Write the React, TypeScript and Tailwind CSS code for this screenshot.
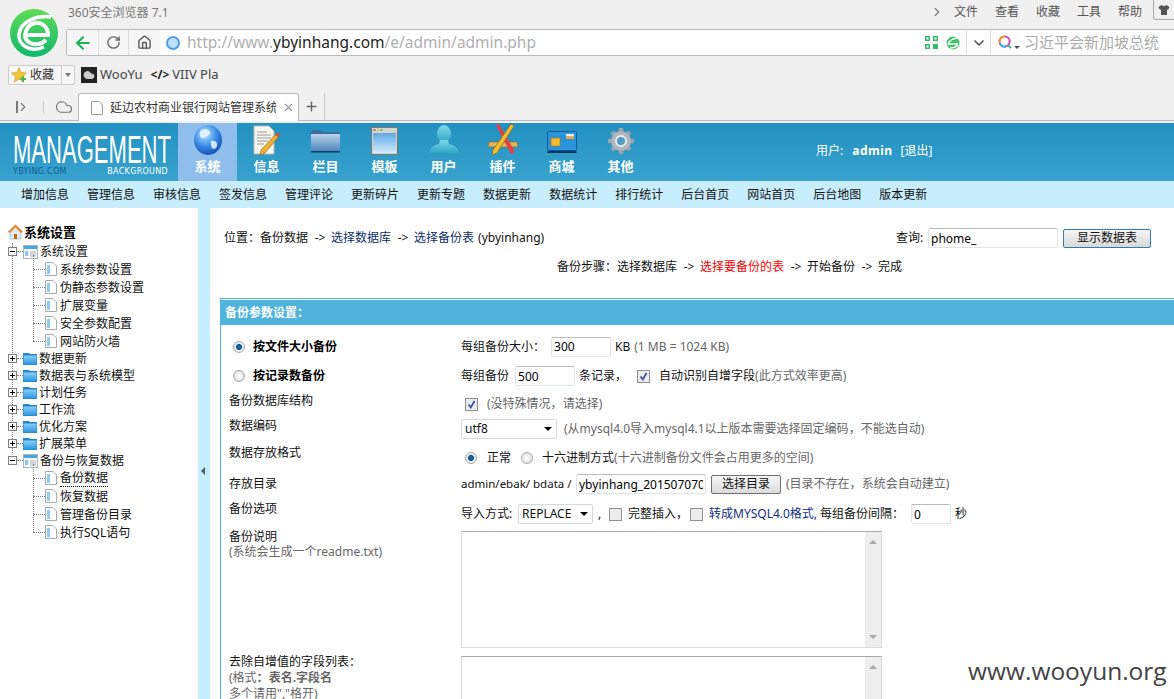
import type { ReactNode } from "react";
import { ArrowLeft, ChevronDown, ChevronRight, House, RotateCw, Plus, X, Cloud } from "lucide-react";

const menuItems = ["增加信息", "管理信息", "审核信息", "签发信息", "管理评论", "更新碎片", "更新专题", "数据更新", "数据统计", "排行统计", "后台首页", "网站首页", "后台地图", "版本更新"];

// full width punctuation, the page was made with a CJK system font
const FC = "\uFF1A";
const FM = "\uFF0C";

function BrowserLogo() {
  return (
    <svg viewBox="0 0 48 48" className="w-12 h-12 shrink-0">
      <defs>
        <linearGradient id="lg" x1="0" y1="0" x2="0" y2="1">
          <stop offset="0" stopColor="#5fdc55" />
          <stop offset="1" stopColor="#10b86e" />
        </linearGradient>
      </defs>
      <circle cx="24" cy="24" r="24" fill="url(#lg)" />
      <path d="M41 8 C27 6 11 12 9 25 C8 36 20 44 34 38" fill="none" stroke="#fff" strokeWidth="3.5" />
      <path d="M15 26 H38 C38 17 31 13 25 14 C20 15 16 19 15 26 C15 32 21 36 27 35 C31 35 34 33 36 31" fill="none" stroke="#fff" strokeWidth="4" />
    </svg>
  );
}

function Globe() {
  return (
    <svg viewBox="0 0 28 30" className="w-[28px] h-[30px]">
      <defs>
        <radialGradient id="gl" cx="0.4" cy="0.3" r="0.8">
          <stop offset="0" stopColor="#bfe6ff" />
          <stop offset="0.5" stopColor="#3a8fe8" />
          <stop offset="1" stopColor="#0c3fa8" />
        </radialGradient>
      </defs>
      <ellipse cx="14" cy="15" rx="14" ry="15" fill="url(#gl)" />
      <path d="M7 5 C12 3 17 5 16 9 C13 11 11 14 7 13 C5 11 5 7 7 5 Z M17 16 C22 15 25 18 22 23 C19 26 16 22 17 16 Z" fill="#e9f6ff" opacity="0.85" />
    </svg>
  );
}

function DocPencil() {
  return (
    <svg viewBox="0 0 27 30" className="w-[27px] h-[30px]">
      <path d="M1 1 H16 L21 6 V29 H1 Z" fill="#f6f6f2" stroke="#b9b9b0" />
      <path d="M4 7 H14 M4 10 H18 M4 13 H18 M4 16 H15 M4 19 H11" stroke="#9a9a95" />
      <path d="M24 8 L27 10 L12 28 L7 30 L8 25 Z" fill="#f2b233" stroke="#8a5a10" strokeWidth="0.6" />
      <path d="M22 10 L25 12 L27 10 L24 8 Z" fill="#d2503c" />
    </svg>
  );
}

function BigFolder() {
  return (
    <svg viewBox="0 0 31 24" className="w-[31px] h-[24px] mb-[2px]">
      <defs>
        <linearGradient id="bf" x1="0" y1="0" x2="0" y2="1">
          <stop offset="0" stopColor="#b9d3ea" />
          <stop offset="1" stopColor="#4f87bd" />
        </linearGradient>
      </defs>
      <path d="M1 3 Q1 1 3 1 H11 L13 3 H29 Q30 3 30 5 V22 H1 Z" fill="#3e6d9b" />
      <rect x="1" y="5" width="29" height="17" fill="url(#bf)" />
      <rect x="1" y="22" width="29" height="1.5" fill="#0e3b63" />
    </svg>
  );
}

function WindowIcon() {
  return (
    <svg viewBox="0 0 27 28" className="w-[27px] h-[28px]">
      <defs>
        <linearGradient id="wn" x1="0" y1="0" x2="0" y2="1">
          <stop offset="0" stopColor="#5fa9e6" />
          <stop offset="1" stopColor="#d3ebfb" />
        </linearGradient>
      </defs>
      <rect x="0.5" y="0.5" width="26" height="27" fill="#d4d4cc" stroke="#777" />
      <circle cx="3.5" cy="3" r="1.1" fill="#e0483c" />
      <circle cx="7" cy="3" r="1.1" fill="#e8c23c" />
      <circle cx="10.5" cy="3" r="1.1" fill="#54b84c" />
      <rect x="2" y="6" width="23" height="20" fill="url(#wn)" />
    </svg>
  );
}

function UserIcon() {
  return (
    <svg viewBox="0 0 30 29" className="w-[30px] h-[29px] mb-[1px]">
      <defs>
        <linearGradient id="us" x1="0" y1="0" x2="0" y2="1">
          <stop offset="0" stopColor="#7fd8e8" />
          <stop offset="1" stopColor="#2ba6c4" />
        </linearGradient>
      </defs>
      <ellipse cx="15" cy="9" rx="7" ry="9" fill="url(#us)" />
      <path d="M11 15 H19 L20 19 C26 20 29 23 30 28 H0 C1 23 4 20 10 19 Z" fill="url(#us)" />
    </svg>
  );
}

function ToolsIcon() {
  return (
    <svg viewBox="0 0 32 31" className="w-[32px] h-[31px]">
      <path d="M2 18 L30 18 L31 23 L1 23 Z" fill="#e0b45c" stroke="#8a6418" strokeWidth="0.6" />
      <path d="M9 1 L12 0 L28 28 L24 30 Z" fill="#e8403c" />
      <path d="M24 0 L27 2 L10 29 L5 31 L6 26 Z" fill="#f4bd2d" stroke="#8a5a10" strokeWidth="0.6" />
    </svg>
  );
}

function CardIcon() {
  return (
    <svg viewBox="0 0 30 22" className="w-[30px] h-[22px] mb-[2px]">
      <rect x="0.5" y="0.5" width="29" height="19" rx="1" fill="#2a93dc" stroke="#0d5a9c" />
      <rect x="4" y="7" width="9" height="8" fill="#f1b92e" stroke="#a8760e" strokeWidth="0.6" />
      <rect x="19" y="3" width="8" height="2.5" fill="#f4f4f4" />
      <rect x="19" y="5.5" width="8" height="2.5" fill="#f1a52e" />
      <rect x="0.5" y="20" width="29" height="2" fill="#08365f" />
    </svg>
  );
}

function GearIcon() {
  return (
    <svg viewBox="0 0 28 28" className="w-[28px] h-[28px]">
      <g stroke="#9aa3a9" strokeWidth="4.5">
        <path d="M14 1 V27 M1 14 H27 M5 5 L23 23 M23 5 L5 23" />
      </g>
      <circle cx="14" cy="14" r="10" fill="#b0b8bd" />
      <circle cx="14" cy="14" r="5" fill="#4d9cc6" stroke="#e8ecee" strokeWidth="2" />
    </svg>
  );
}

function NavItem({ label, icon, active }: { label: string; icon: ReactNode; active?: boolean }) {
  return (
    <div className={`w-[59px] h-[58px] flex flex-col items-center ${active ? "bg-[#8fbeec]" : ""}`}>
      <div className="h-[31px] mt-[1px] flex items-end justify-center">{icon}</div>
      <div className="mt-[3px] text-[13px] leading-[16px] font-bold text-white">{label}</div>
    </div>
  );
}

function SmallFolder() {
  return (
    <svg viewBox="0 0 14 13" className="w-[14px] h-[13px] shrink-0">
      <defs>
        <linearGradient id="sf" x1="0" y1="0" x2="0" y2="1">
          <stop offset="0" stopColor="#8ad0f8" />
          <stop offset="1" stopColor="#2a94e2" />
        </linearGradient>
      </defs>
      <path d="M0 1 H6 L7 2 H14 V13 H0 Z" fill="#1f86d0" />
      <rect x="0.5" y="3.5" width="13" height="9" fill="url(#sf)" />
    </svg>
  );
}

function OpenFolder() {
  return (
    <svg viewBox="0 0 15 14" className="w-[15px] h-[14px] shrink-0">
      <rect x="0.5" y="0.5" width="14" height="13" fill="#f4f8fb" stroke="#a9b4bc" />
      <rect x="1" y="1" width="13" height="3" fill="#45a7ea" />
      <rect x="2" y="6" width="3" height="5" fill="#8cc4ea" />
      <path d="M7 7 H13 M7 9 H13 M7 11 H13" stroke="#a9b4bc" />
    </svg>
  );
}

function Leaf() {
  return (
    <svg viewBox="0 0 12 14" className="w-[12px] h-[14px] shrink-0">
      <path d="M0.5 0.5 H8 L11.5 4 V13.5 H0.5 Z" fill="#fff" stroke="#a9a9a9" />
      <rect x="2" y="3" width="3" height="9" fill="#8fcdf0" />
    </svg>
  );
}

function Expander({ open }: { open?: boolean }) {
  return (
    <span className="relative z-10 w-[9px] h-[9px] shrink-0 border border-[#7f7f7f] bg-white flex items-center justify-center">
      <span className="w-[5px] h-px bg-black" />
      {!open && <span className="absolute w-px h-[5px] bg-black" />}
    </span>
  );
}

function TreeGroup({ label, open }: { label: string; open?: boolean }) {
  return (
    <div className="h-[17px] flex items-center pl-[8px]">
      <Expander open={open} />
      <span className="w-[6px] border-t border-dotted border-[#808080]" />
      {open ? <OpenFolder /> : <SmallFolder />}
      <span className="ml-[2px]">{label}</span>
    </div>
  );
}

function TreeLeaves({ items, current }: { items: string[]; current?: string }) {
  return (
    <div className="relative">
      <span className="absolute left-[33px] -top-[5px] bottom-[9px] border-l border-dotted border-[#808080]" />
      {items.map((item) => (
        <div key={item} className="h-[18px] flex items-center pl-[33px]">
          <span className="w-[12px] border-t border-dotted border-[#808080]" />
          <Leaf />
          <span className={`ml-[3px] ${item === current ? "border-b border-dotted border-black" : ""}`}>{item}</span>
        </div>
      ))}
    </div>
  );
}

function Sidebar() {
  return (
    <aside className="w-[198px] shrink-0 pt-[15px] text-[12px] leading-[17px] text-[#111]">
      <div className="h-[18px] flex items-center pl-[8px] text-[13px] font-bold text-black">
        <svg viewBox="0 0 15 16" className="w-[15px] h-[16px] mr-[1px]">
          <path d="M7.5 1 L15 8 L13 8 V15 H2 V8 H0 Z" fill="#dfe9f2" stroke="#8ea6bd" strokeWidth="0.6" />
          <path d="M7.5 0.5 L15 8 L12.5 8.5 L7.5 3.5 L2.5 8.5 L0 8 Z" fill="#ef8a2c" />
          <rect x="6" y="10" width="3" height="5" fill="#c76a1a" />
        </svg>
        系统设置
      </div>
      <div className="relative mt-[2px]">
        <span className="absolute left-[12px] top-0 h-[210px] border-l border-dotted border-[#808080]" />
        <TreeGroup label="系统设置" open />
        <TreeLeaves items={["系统参数设置", "伪静态参数设置", "扩展变量", "安全参数配置", "网站防火墙"]} />
        <TreeGroup label="数据更新" />
        <TreeGroup label="数据表与系统模型" />
        <TreeGroup label="计划任务" />
        <TreeGroup label="工作流" />
        <TreeGroup label="优化方案" />
        <TreeGroup label="扩展菜单" />
        <TreeGroup label="备份与恢复数据" open />
        <TreeLeaves items={["备份数据", "恢复数据", "管理备份目录", "执行SQL语句"]} current="备份数据" />
      </div>
    </aside>
  );
}

function Radio({ on }: { on?: boolean }) {
  return (
    <span className={`block w-[12px] h-[12px] rounded-full shrink-0 border border-[#a8a8a8] ${on ? "bg-[radial-gradient(circle,#1a7cc0_0%,#0b4f86_38%,#e4e4e4_45%,#ffffff_100%)]" : "bg-[radial-gradient(circle,#ffffff_0%,#d8d8d8_100%)]"}`} />
  );
}

function Check({ on }: { on?: boolean }) {
  return (
    <span className="w-[13px] h-[13px] shrink-0 border border-[#8e8f8f] bg-[#ececec] flex items-center justify-center">
      {on && (
        <svg viewBox="0 0 11 11" className="w-[11px] h-[11px]">
          <path d="M2.5 5.5 L4.8 8.5 L8.5 2" fill="none" stroke="#3a55a8" strokeWidth="1.8" />
        </svg>
      )}
    </span>
  );
}

function TextBox({ value, width }: { value: string; width: string }) {
  return (
    <input
      readOnly
      value={value}
      className={`${width} h-[20px] block shrink-0 px-[2px] border border-[#dfe3ea] border-t-[#bcbcbc] bg-white text-[12px] text-black outline-none rounded-[2px]`}
    />
  );
}

function SelectBox({ value, width }: { value: string; width: string }) {
  return (
    <div className={`${width} h-[20px] shrink-0 pl-[3px] pr-[4px] border border-[#d5d9df] rounded-[2px] flex items-center justify-between`}>
      <span>{value}</span>
      <span className="w-0 h-0 border-x-[4px] border-x-transparent border-t-[4px] border-t-black" />
    </div>
  );
}

function TextArea({ height }: { height: string }) {
  return (
    <div className={`w-[421px] ${height} border border-[#dcdcdc] border-t-[#a8a8a8] flex justify-end`}>
      <div className="w-[16px] h-full bg-[#eeeeee] flex flex-col items-center justify-between py-[8px]">
        <span className="w-0 h-0 border-x-[4px] border-x-transparent border-b-[4px] border-b-[#aaa]" />
        <span className="w-0 h-0 border-x-[4px] border-x-transparent border-t-[4px] border-t-[#aaa]" />
      </div>
    </div>
  );
}

function Row({ label, labelClass, valueClass, height, children }: { label: ReactNode; labelClass: string; valueClass: string; height: string; children: ReactNode }) {
  return (
    <div className={`grid grid-cols-[240px_1fr] ${height}`}>
      <div className={`pl-[8px] ${labelClass}`}>{label}</div>
      <div className={`flex items-center self-start whitespace-nowrap ${valueClass}`}>{children}</div>
    </div>
  );
}

function Arrow() {
  return <span className="inline-block w-[12px] ml-[6px] mr-[5px] text-center">-&gt;</span>;
}

const hint = "text-[#666]";

function BackupForm() {
  return (
    <div className="mt-[22px] ml-[10px] border-l border-t border-[#4fb3dd] text-[12px] leading-[18px] text-[#111]">
      <div className="h-[25px] mt-px bg-[#4fb3dd] pl-[4px] flex items-center font-bold text-white">备份参数设置{FC}</div>
      <div className="pt-[7px]">
        <div className="grid grid-cols-[240px_1fr] h-[29px]">
          <div className="pl-[12px] flex items-center font-bold text-black"><Radio on /><span className="ml-[8px]">按文件大小备份</span></div>
          <div className="flex items-center whitespace-nowrap">
            <span>每组备份大小{FC}</span>
            <span className="ml-[6px]"><TextBox value="300" width="w-[60px]" /></span>
            <span className="ml-[4px]">KB</span>
            <span className={`ml-[4px] ${hint}`}>(1 MB = 1024 KB)</span>
          </div>
        </div>
        <div className="grid grid-cols-[240px_1fr] h-[30px]">
          <div className="pl-[12px] flex items-center font-bold text-black"><Radio /><span className="ml-[8px]">按记录数备份</span></div>
          <div className="flex items-center whitespace-nowrap">
            <span>每组备份</span>
            <span className="ml-[6px]"><TextBox value="500" width="w-[60px]" /></span>
            <span className="ml-[4px]">条记录{FM}</span>
            <span className="ml-[10px]"><Check on /></span>
            <span className="ml-[9px]">自动识别自增字段</span>
            <span className={hint}>(此方式效率更高)</span>
          </div>
        </div>
        <Row height="h-[24px]" label="备份数据库结构" labelClass="pt-px" valueClass="pt-[4px]">
          <span className="ml-[4px]"><Check on /></span>
          <span className={`ml-[9px] ${hint}`}>(没特殊情况{FM}请选择)</span>
        </Row>
        <Row height="h-[27px]" label="数据编码" labelClass="pt-[2px]" valueClass="pt-[4px]">
          <SelectBox value="utf8" width="w-[96px]" />
          <span className={`ml-[7px] ${hint}`}>(从mysql4.0导入mysql4.1以上版本需要选择固定编码{FM}不能选自动)</span>
        </Row>
        <Row height="h-[31px]" label="数据存放格式" labelClass="pt-[2px]" valueClass="pt-[7px]">
          <span className="ml-[4px]"><Radio on /></span>
          <span className="ml-[10px]">正常</span>
          <span className="ml-[10px]"><Radio /></span>
          <span className="ml-[9px]">十六进制方式</span>
          <span className={hint}>(十六进制备份文件会占用更多的空间)</span>
        </Row>
        <Row height="h-[25px]" label="存放目录" labelClass="pt-[2px]" valueClass="pt-px">
          <span className="w-[115px] shrink-0 text-[11.5px]">admin/ebak/ bdata /</span>
          <TextBox value="ybyinhang_201507070" width="w-[130px]" />
          <span className="ml-[5px] w-[70px] h-[19px] shrink-0 border border-[#707070] rounded-[2px] bg-[linear-gradient(#f6f6f6,#dcdcdc)] flex items-center justify-center">选择目录</span>
          <span className={`ml-[5px] ${hint}`}>(目录不存在{FM}系统会自动建立)</span>
        </Row>
        <Row height="h-[29px]" label="备份选项" labelClass="pt-[2px]" valueClass="pt-[6px]">
          <span className="w-[57px] shrink-0">导入方式:</span>
          <SelectBox value="REPLACE" width="w-[75px]" />
          <span className="ml-[5px] w-[11px] shrink-0">,</span>
          <Check />
          <span className="ml-[6px] w-[62px] shrink-0">完整插入{FM}</span>
          <Check />
          <span className="ml-[6px] w-[105px] shrink-0 text-[#0b2d8a]">转成MYSQL4.0格式,</span>
          <span className="ml-[6px] w-[91px] shrink-0">每组备份间隔{FC}</span>
          <TextBox value="0" width="w-[40px]" />
          <span className="ml-[4px]">秒</span>
        </Row>
        <Row height="h-[125px]" label={<>备份说明<br /><span className={hint}>(系统会生成一个readme.txt)</span></>} labelClass="leading-[15px] pt-[2px]" valueClass="pt-[4px]">
          <TextArea height="h-[117px]" />
        </Row>
        <Row height="h-[60px]" label={<>去除自增值的字段列表{FC}<br /><span className={hint}>(格式<b>{FC}表名.字段名</b><br />多个请用","格开)</span></>} labelClass="leading-[16px] pt-[2px]" valueClass="pt-[4px]">
          <TextArea height="h-[117px]" />
        </Row>
      </div>
    </div>
  );
}

export default function App() {
  return (
    <div className="relative w-[1174px] h-[699px] overflow-hidden bg-white font-['Noto_Sans','Noto_Sans_CJK_SC',sans-serif]">
      {/* browser chrome */}
      <div className="h-[123px] bg-[#f0f0f0] text-[12px] text-[#444]">
        <div className="h-[64px] flex items-start">
          <div className="ml-[10px] mt-[9px]"><BrowserLogo /></div>
          <div className="flex-1 min-w-0 ml-[8px]">
            <div className="h-[29px] flex items-start">
              <span className="ml-[2px] mt-[4px] text-[#777]">360安全浏览器 7.1</span>
              <div className="ml-auto mt-[3px] flex items-center text-[#555]">
                <ChevronRight size={14} className="mr-[10px] text-[#777]" />
                <span className="mr-[17px]">文件</span>
                <span className="mr-[17px]">查看</span>
                <span className="mr-[17px]">收藏</span>
                <span className="mr-[17px]">工具</span>
                <span className="mr-[11px]">帮助</span>
              </div>
              <div className="w-[21px] h-[20px] border-l border-b border-[#aaa] rounded-bl-[3px] flex items-center justify-center">
                <svg viewBox="0 0 12 12" className="w-[12px] h-[12px]"><path d="M3.5 1 L0.5 3 L2 6 L3 5.5 V11 H9 V5.5 L10 6 L11.5 3 L8.5 1 Q6 3 3.5 1 Z" fill="#555" /></svg>
              </div>
            </div>
            <div className="h-[27px] bg-white border border-r-0 border-[#bbb] rounded-l-[3px] flex items-center">
              <div className="w-[32px] h-full border-r border-[#ddd] bg-[#f6f6f6] flex items-center justify-center"><ArrowLeft size={20} strokeWidth={2.5} className="text-[#1db455]" /></div>
              <div className="w-[30px] h-full border-r border-[#ddd] bg-[#f6f6f6] flex items-center justify-center"><RotateCw size={15} strokeWidth={2.2} className="text-[#666]" /></div>
              <div className="w-[31px] h-full bg-[#f6f6f6] flex items-center justify-center"><House size={15} strokeWidth={2.2} className="text-[#555]" /></div>
              <svg viewBox="0 0 16 16" className="w-[16px] h-[16px] ml-[5px] shrink-0">
                <circle cx="8" cy="8" r="6" fill="#bfe0fa" stroke="#4a9fe6" strokeWidth="2" />
              </svg>
              <span className="ml-[6px] text-[15.5px] text-[#b0b0b0] whitespace-nowrap">http://www.<span className="text-[#222]">ybyinhang.com</span>/e/admin/admin.php</span>
              <div className="ml-auto flex items-center h-full">
                <svg viewBox="0 0 13 13" className="w-[13px] h-[13px]">
                  <path d="M0 0 H5 V5 H0 Z M8 0 H13 V5 H8 Z M0 8 H5 V13 H0 Z M8 8 H13 V13 H8 Z" fill="#2fbf6c" />
                  <path d="M1.5 1.5 H3.5 V3.5 H1.5 Z M9.5 1.5 H11.5 V3.5 H9.5 Z M1.5 9.5 H3.5 V11.5 H1.5 Z" fill="#fff" />
                </svg>
                <svg viewBox="0 0 14 14" className="w-[14px] h-[14px] ml-[8px]">
                  <circle cx="7" cy="7" r="6.5" fill="#3bc46b" />
                  <path d="M2 9 C3 4 8 2 13 2 M2 8 H12 M4 12 C7 12 10 11 12 9" stroke="#fff" strokeWidth="1.4" fill="none" />
                </svg>
                <div className="ml-[6px] w-[25px] h-full border-x border-[#ddd] flex items-center justify-center"><ChevronDown size={16} strokeWidth={2.5} className="text-[#555]" /></div>
                <svg viewBox="0 0 16 16" className="w-[15px] h-[15px] ml-[7px]">
                  <circle cx="7" cy="7" r="5.5" fill="none" stroke="#e23ab0" strokeWidth="2" />
                  <path d="M7 1.5 A5.5 5.5 0 0 0 2 9" fill="none" stroke="#f0a020" strokeWidth="2" />
                  <path d="M2 9 A5.5 5.5 0 0 0 9 12" fill="none" stroke="#25b8e8" strokeWidth="2" />
                  <path d="M10.5 10.5 L14 14" stroke="#2fbf6c" strokeWidth="2" />
                </svg>
                <span className="w-0 h-0 mt-[10px] ml-[1px] border-x-[3px] border-x-transparent border-t-[3px] border-t-[#555]" />
                <span className="ml-[4px] w-[150px] text-[15px] text-[#aaa] whitespace-nowrap">习近平会新加坡总统</span>
              </div>
            </div>
          </div>
        </div>
        <div className="h-[21px] flex items-center pl-[8px]">
          <div className="w-[67px] h-[20px] border border-[#ccc] rounded-[2px] bg-[#f6f6f6] flex items-center">
            <svg viewBox="0 0 16 16" className="w-[16px] h-[16px] ml-[2px] shrink-0">
              <path d="M8 0.5 L10.2 5.5 L15.5 6 L11.5 9.5 L12.7 15 L8 12 L3.3 15 L4.5 9.5 L0.5 6 L5.8 5.5 Z" fill="#f4c63a" stroke="#c8962a" strokeWidth="0.6" />
              <path d="M9 11 H11 V9 H13 V11 H15 V13 H13 V15 H11 V13 H9 Z" fill="#4fb848" />
            </svg>
            <span className="ml-[3px] text-[#333]">收藏</span>
            <span className="ml-auto h-full w-[13px] border-l border-[#ccc] flex items-center justify-center"><span className="w-0 h-0 border-x-[3px] border-x-transparent border-t-[4px] border-t-[#777]" /></span>
          </div>
          <span className="ml-[6px] w-[16px] h-[16px] bg-[#222] flex items-center justify-center"><Cloud size={12} className="text-[#ccc]" fill="#ccc" /></span>
          <span className="ml-[3px] text-[13px] text-[#444]">WooYu</span>
          <span className="ml-[8px] text-[12px] font-bold text-[#222]">&lt;/&gt;</span>
          <span className="ml-[3px] text-[13px] text-[#444]">VIIV Pla</span>
        </div>
        <div className="h-[28px] mt-[8px] border-b border-[#bbb] flex items-end">
          <div className="w-[78px] h-[27px] flex items-center text-[#777]">
            <span className="ml-[16px] w-[2px] h-[12px] bg-[#777]" />
            <ChevronRight size={14} strokeWidth={2} className="-ml-[2px]" />
            <span className="ml-[13px] w-px h-[12px] bg-[#ccc]" />
            <Cloud size={18} strokeWidth={1.6} className="ml-[11px]" />
          </div>
          <div className="w-[221px] h-[28px] -mb-px bg-white border border-b-0 border-[#bbb] rounded-t-[3px] flex items-center">
            <svg viewBox="0 0 12 14" className="w-[12px] h-[14px] ml-[12px]"><path d="M0.5 0.5 H8 L11.5 4 V13.5 H0.5 Z" fill="#fff" stroke="#999" /></svg>
            <span className="ml-[7px] w-[166px] overflow-hidden whitespace-nowrap text-[#333]">延边农村商业银行网站管理系统</span>
            <X size={13} className="ml-[6px] text-[#999]" />
          </div>
          <div className="w-[26px] h-[27px] border-r border-[#ccc] flex items-center justify-center"><Plus size={15} strokeWidth={2.2} className="text-[#666]" /></div>
        </div>
      </div>

      {/* site header */}
      <div className="h-[58px] bg-[linear-gradient(#2191c1,#39a2cf)] flex">
        <div className="w-[178px] shrink-0 pl-[13px] pt-[12px] overflow-hidden">
          <div className="origin-left scale-x-[.58] w-[272px] h-[30px] font-['Liberation_Sans',sans-serif] text-[38px] leading-[30px] text-white whitespace-nowrap">MANAGEMENT</div>
          <div className="w-[155px] mt-[2px] flex justify-between font-['DejaVu_Sans',sans-serif] text-[8px] leading-[10px] tracking-[0.3px]">
            <span className="text-[#0d5f8c]">YBYING.COM</span>
            <span className="text-white">BACKGROUND</span>
          </div>
        </div>
        <NavItem label="系统" icon={<Globe />} active />
        <NavItem label="信息" icon={<DocPencil />} />
        <NavItem label="栏目" icon={<BigFolder />} />
        <NavItem label="模板" icon={<WindowIcon />} />
        <NavItem label="用户" icon={<UserIcon />} />
        <NavItem label="插件" icon={<ToolsIcon />} />
        <NavItem label="商城" icon={<CardIcon />} />
        <NavItem label="其他" icon={<GearIcon />} />
        <div className="ml-[166px] pt-[20px] text-[12px] leading-[16px] text-white whitespace-nowrap">
          用户:<b className="ml-[9px] tracking-[0.5px]">admin</b><span className="ml-[8px]">[退出]</span>
        </div>
      </div>
      <div className="h-[27px] bg-[#c8eefe] pl-[21px] flex items-center gap-[18px] text-[12px] text-[#111]">
        {menuItems.map((item) => (
          <span key={item} className="whitespace-nowrap">{item}</span>
        ))}
      </div>

      {/* page body */}
      <div className="flex h-[491px]">
        <Sidebar />
        <div className="w-[12px] shrink-0 bg-[#c6eefe] flex items-center justify-center pt-[35px] pr-[2px]">
          <span className="w-0 h-0 border-y-[4px] border-y-transparent border-r-[4px] border-r-[#4a5a66]" />
        </div>
        <main className="flex-1 min-w-0 text-[12px] text-[#111]">
          <div className="h-[41px] pl-[14px] pr-[23px] flex items-start justify-between">
            <div className="pt-[21px] leading-[18px] whitespace-nowrap">
              位置{FC}备份数据<Arrow /><span className="text-[#0b2d6e]">选择数据库</span><Arrow /><span className="text-[#0b2d6e]">选择备份表</span><span className="ml-[4px]">(ybyinhang)</span>
            </div>
            <div className="pt-[20px] flex items-center">
              <span className="w-[31px]">查询:</span>
              <span className="ml-[1px]"><TextBox value="phome_" width="w-[130px]" /></span>
              <span className="ml-[5px] w-[88px] h-[19px] border border-[#2f7fae] rounded-[2px] bg-[linear-gradient(#f6f6f6,#d8d8d8)] flex items-center justify-center">显示数据表</span>
            </div>
          </div>
          <div className="h-[18px] mt-[9px] pl-[347px] leading-[18px] whitespace-nowrap">
            备份步骤{FC}选择数据库<Arrow /><span className="text-[#ff0000]">选择要备份的表</span><Arrow />开始备份<Arrow />完成
          </div>
          <BackupForm />
        </main>
      </div>

      {/* watermark */}
      <div className="absolute left-[968px] top-[655px] text-[24.5px] leading-[32px] text-[#444] font-['Open_Sans',sans-serif]">www.wooyun.org</div>
    </div>
  );
}
